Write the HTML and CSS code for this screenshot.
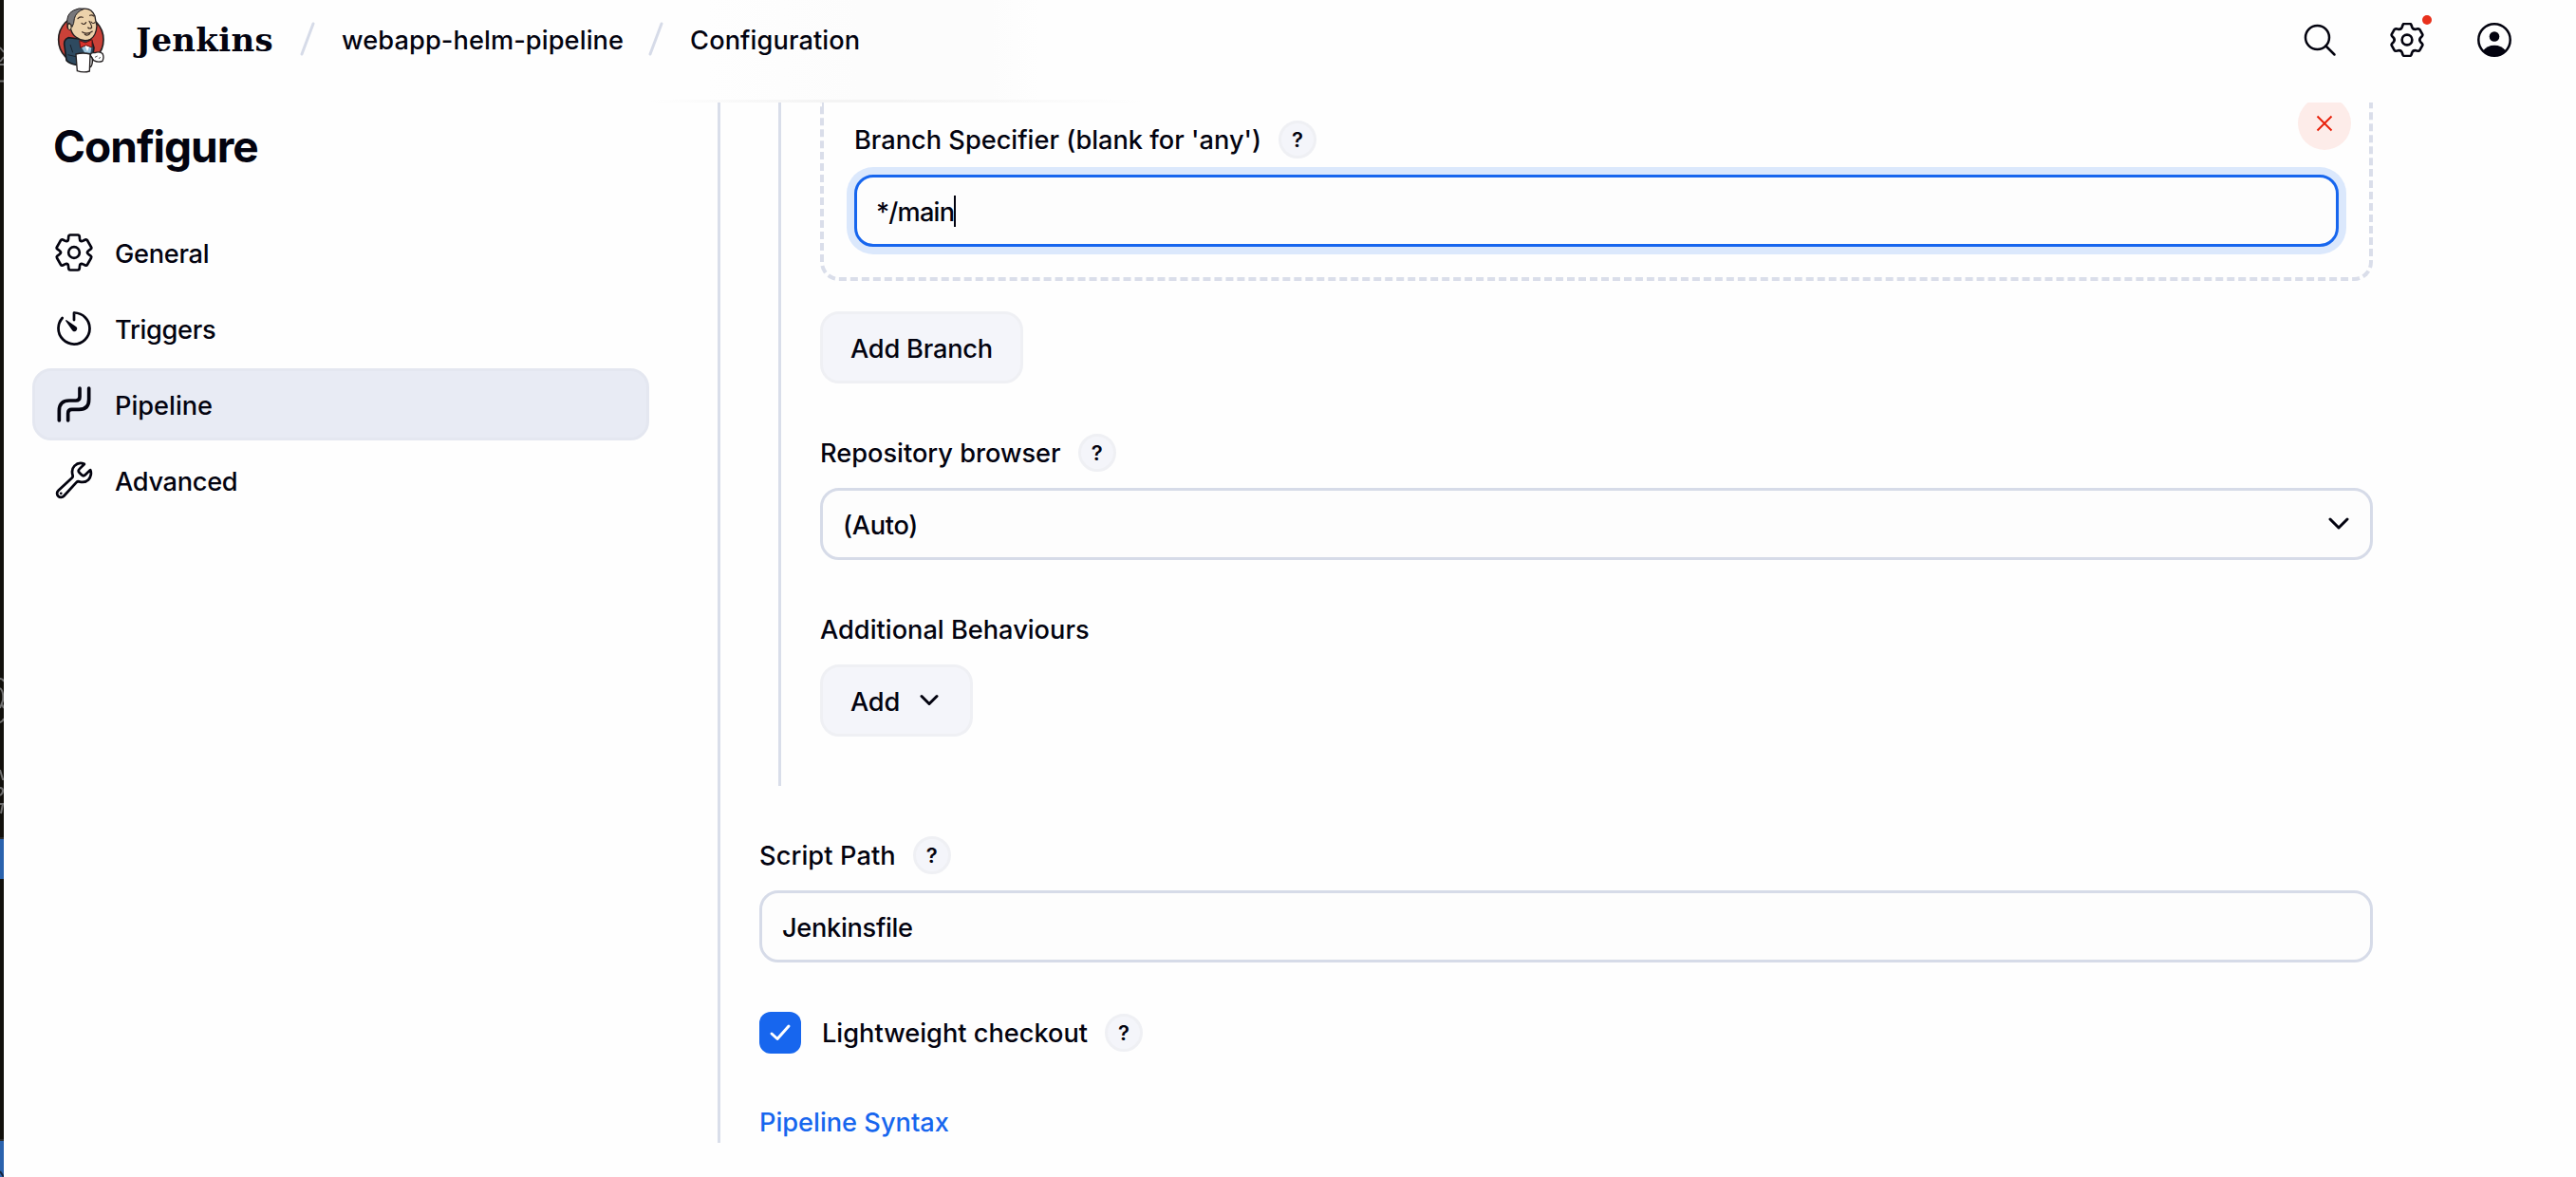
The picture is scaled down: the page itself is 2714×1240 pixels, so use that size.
FILE: index.html
```html
<!DOCTYPE html>
<html lang="en">
<head>
<meta charset="utf-8">
<title>webapp-helm-pipeline Config - Jenkins</title>
<link rel="stylesheet" href="styles.css">
</head>
<body>
<svg width="0" height="0" class="defs" aria-hidden="true">
  <defs>
    <path id="tooth" d="M-21 -36.4C-17 -38.7 -18 -42 -17.6 -46L-17.2 -51Q-16.5 -55.5 -12 -55.5H12Q16.5 -55.5 17.2 -51L17.6 -46C18 -42 17 -38.7 21 -36.4"/>
    <path id="lobe" d="M-20 -34.6C-15 -37.5 -16 -40 -14.5 -44L-13 -48Q-11.5 -51 -8 -51H8Q11.5 -51 13 -48L14.5 -44C16 -40 15 -37.5 20 -34.6"/>
  </defs>
</svg>
<div class="screen">
  <svg class="backdrop" width="4" height="1240" viewBox="0 0 4 1240">
    <rect width="4" height="1240" fill="#12100c"/>
    <g stroke="#6f6f6f" stroke-width="2" fill="none">
      <path d="M0 50L4 55M0 65L4 60M0 68H4M0 85.500H4"/>
      <path d="M0 715Q3 715 4 718M0 725Q4 728 3 738L0 746M2 742L4 746M0 761Q3 760 4 757M0 811L3 821H4M0 830Q3 830 3 833T0 838M0 847H4M3 847L1 857"/>
    </g>
    <rect y="882" width="4" height="2" fill="#2b2b2b"/>
    <rect y="884" width="4" height="42" fill="#2a62ad"/>
    <rect y="1200" width="4" height="2" fill="#2b2b2b"/>
    <rect y="1202" width="4" height="38" fill="#2a62ad"/>
    <path d="M0 1234L4 1240" stroke="#14233b" stroke-width="2"/>
  </svg>
  <div class="app">
    <header class="header">
      <svg class="logo" width="50" height="70" viewBox="180 20 150 210">
        <ellipse cx="256" cy="124" rx="71" ry="75" fill="#cb4138" stroke="#231f20" stroke-width="5"/>
        <path d="M216 118Q202 124 203 138L210 190Q222 202 242 204L290 196L297 150L290 128L250 122Z" fill="#2e4a60" stroke="#191b20" stroke-width="5"/>
        <path d="M222 140L230 165M214 172L240 178" stroke="#18222d" stroke-width="3" fill="none"/>
        <path d="M256 146L268 166H286L291 140Z" fill="#9cc4dc"/>
        <path d="M268 142L276 162L284 142Z" fill="#fff"/>
        <path d="M224 92Q212 92 213 80Q214 68 224 70Q228 38 256 28Q288 20 300 50Q302 66 306 80Q304 112 286 123Q264 134 240 116Q228 108 224 92Z" fill="#ecd2ab" stroke="#231f20" stroke-width="4"/>
        <path d="M213 76Q208 44 232 32Q250 22 266 27Q240 36 235 58Q234 74 228 84Q220 64 213 76Z" fill="#77777b" stroke="#231f20" stroke-width="3"/>
        <path d="M214 80Q216 70 224 76Q228 88 222 94Q214 94 214 80Z" fill="#ecd2ab" stroke="#231f20" stroke-width="3"/>
        <path d="M246 58Q252 50 262 54M284 48Q290 44 296 50M258 72Q266 80 272 70M288 68Q294 76 300 70M282 66Q290 80 290 86Q284 92 278 86M260 100Q276 110 292 98M268 108Q276 114 284 106" fill="none" stroke="#3a2a22" stroke-width="3.500" stroke-linecap="round"/>
        <path d="M251 127L270 134L291 124V149L272 142L254 150Z" fill="#d8322c" stroke="#5b1512" stroke-width="3"/>
        <path d="M286 174Q286 164 300 166Q312 160 324 168Q330 180 324 192Q310 198 296 190Z" fill="#fff" stroke="#231f20" stroke-width="4"/>
        <path d="M300 180L308 176M312 184L318 180" stroke="#555" stroke-width="3"/>
        <path d="M282 178Q294 176 292 196Q290 212 282 212" fill="#ddd" stroke="#231f20" stroke-width="4"/>
        <path d="M240 170Q262 164 285 170L283 224Q264 230 244 223Z" fill="#fff" stroke="#231f20" stroke-width="4"/>
      </svg>
      <span class="brand">Jenkins</span>
      <svg class="slash" width="16" height="36" viewBox="0 0 16 36"><path d="M2 34L14 2"/></svg>
      <span class="crumb">webapp-helm-pipeline</span>
      <svg class="slash" width="16" height="36" viewBox="0 0 16 36"><path d="M2 34L14 2"/></svg>
      <span class="crumb">Configuration</span>
      <div class="actions">
        <svg class="icon" width="36" height="36" viewBox="0 0 36 36"><circle cx="15.500" cy="15.500" r="12.500"/><path d="M24.500 24.500L33.500 33.500"/></svg>
        <span class="manage">
          <svg class="icon" width="36" height="36" viewBox="-54 -54 108 108">
            <g class="gear"><use href="#lobe"/><use href="#lobe" transform="rotate(60)"/><use href="#lobe" transform="rotate(120)"/><use href="#lobe" transform="rotate(180)"/><use href="#lobe" transform="rotate(240)"/><use href="#lobe" transform="rotate(300)"/><circle r="16"/></g>
          </svg>
          <span class="dot"></span>
        </span>
        <svg class="icon" width="36" height="36" viewBox="0 0 36 36"><circle cx="18" cy="18" r="16.700"/><circle class="solid" cx="18" cy="14.500" r="5.300"/><path class="solid" d="M6 29.500C9 25.500 13 23.700 18 23.700S27 25.500 30 29.500C27 33 22.500 34.800 18 34.800S9 33 6 29.500Z"/></svg>
      </div>
    </header>
    <div class="main">
      <aside class="sidebar">
        <h1>Configure</h1>
        <nav>
          <a class="item">
            <svg class="icon" width="44" height="44" viewBox="-66 -66 132 132">
              <g class="gear"><use href="#tooth"/><use href="#tooth" transform="rotate(60)"/><use href="#tooth" transform="rotate(120)"/><use href="#tooth" transform="rotate(180)"/><use href="#tooth" transform="rotate(240)"/><use href="#tooth" transform="rotate(300)"/><circle r="17.500"/></g>
            </svg><span class="text">General</span></a>
          <a class="item">
            <svg class="icon ion" width="44" height="44" viewBox="0 0 512 512"><path d="M112.910 128A191.850 191.850 0 0064 254c-1.180 106.350 85.650 193.800 192 194 106.200.2 192-85.830 192-192 0-104.540-83.550-189.610-187.500-192a4.360 4.360 0 00-4.500 4.370V152"/><path class="solid" d="M233.380 278.630l-79-113a8.130 8.130 0 0111.320-11.320l113 79a32.500 32.500 0 01-37.250 53.260 33.210 33.210 0 01-8.070-7.940z"/></svg><span class="text">Triggers</span></a>
          <a class="item active">
            <svg class="icon pipe" width="44" height="44" viewBox="0 0 132 132"><path d="M19 117V86Q19 54 51 54H72Q84 54 84 42V15"/><path d="M47 117V94Q47 82 59 82H82Q113 82 113 50V15"/></svg><span class="text">Pipeline</span></a>
          <a class="item">
            <svg class="icon ion" width="44" height="44" viewBox="0 0 512 512"><path d="M393.870 190a32.100 32.100 0 01-45.250 0l-26.570-26.570a32.090 32.090 0 010-45.260L382.190 58a1 1 0 00-.3-1.640c-38.820-16.640-89.150-8.160-121.110 23.570-30.580 30.350-32.320 76-21.120 115.840a31.930 31.930 0 01-9.060 32.080L64 380a48.170 48.170 0 1068 68l153.860-167a31.930 31.930 0 0131.600-9.130c39.540 10.590 84.540 8.600 114.720-21.190 32.490-32 39.500-88.560 23.750-120.930a1 1 0 00-1.600-.26z"/><circle class="solid" cx="96" cy="416" r="16"/></svg><span class="text">Advanced</span></a>
        </nav>
      </aside>
      <main class="content">
        <section class="scm">
          <div class="branch">
            <div class="label"><span class="name">Branch Specifier (blank for 'any')</span><span class="help">?</span></div>
            <div class="field focused"><span class="text">*/main</span><i class="caret"></i></div>
            <span class="remove"><svg width="18" height="18" viewBox="0 0 18 18"><path d="M1.500 1.500L16.500 16.500M16.500 1.500L1.500 16.500"/></svg></span>
          </div>
          <button class="button"><span class="text">Add Branch</span></button>
          <div class="label"><span class="name">Repository browser</span><span class="help">?</span></div>
          <div class="field select"><span class="text">(Auto)</span><svg class="chevron" width="22" height="14" viewBox="0 0 22 14"><path d="M2 2L11 11L20 2"/></svg></div>
          <div class="label"><span class="name">Additional Behaviours</span></div>
          <button class="button"><span class="text">Add</span><svg class="chevron small" width="20" height="14" viewBox="0 0 20 14"><path d="M2 2.500L10 10.500L18 2.500"/></svg></button>
        </section>
        <div class="label"><span class="name path">Script Path</span><span class="help">?</span></div>
        <div class="field"><span class="text">Jenkinsfile</span></div>
        <div class="check-row">
          <span class="checkbox"><svg width="24" height="20" viewBox="0 0 24 20"><path d="M3 11L9 16.500L21 3"/></svg></span>
          <span class="name">Lightweight checkout</span><span class="help">?</span>
        </div>
        <a class="link">Pipeline Syntax</a>
      </main>
    </div>
  </div>
</div>
</body>
</html>
```
FILE: styles.css
```css
* {
  box-sizing: border-box;
}

body {
  margin: 0;
  background: #fefefe;
  color: #03030f;
  font-family: Inter, "Noto Sans", sans-serif;
  font-size: 27.2px;
  font-weight: 450;
  line-height: 40px;
}

.defs {
  display: block;
  position: absolute;
}

.screen {
  display: flex;
  width: 2714px;
  height: 1240px;
  overflow: hidden;
}

.backdrop {
  flex: none;
  display: block;
}

.app {
  flex: 1;
  display: flex;
  flex-direction: column;
}

.header {
  display: flex;
  align-items: flex-start;
  height: 108px;
  padding-left: 56px;
  background:
    linear-gradient(90deg, transparent 680px, #f4f4f4 860px, #f4f4f4 940px, transparent 1200px) 0 105px / 100% 3px no-repeat,
    linear-gradient(90deg, transparent 740px, #fcfcfc 900px, #fcfcfc 1040px, transparent 1090px);
}

.header > span {
  margin-top: 23px;
  white-space: nowrap;
}

.logo {
  margin-top: 7px;
}

.header .brand {
  width: 148px;
  margin-top: 22px;
  margin-left: 33px;
  font-family: "DejaVu Serif", Georgia, serif;
  font-size: 34px;
  font-weight: 700;
  letter-spacing: 0.3px;
}

.slash {
  margin-top: 23px;
  margin-left: 25px;
  fill: none;
  stroke: #d6dbe8;
  stroke-width: 3;
  stroke-linecap: round;
}

.crumb {
  margin-left: 28px;
  font-weight: 500;
  letter-spacing: 0.1px;
}

.crumb + .slash {
  margin-left: 26px;
}

.icon {
  display: block;
  flex: none;
  fill: none;
  stroke: #03030f;
  stroke-width: 2.5;
  stroke-linecap: round;
  stroke-linejoin: round;
}

.icon .gear {
  stroke-width: 8;
}

.ion {
  stroke-width: 32;
}

.pipe {
  stroke-width: 11;
}

.icon .solid {
  fill: #03030f;
  stroke: none;
}

.actions {
  display: flex;
  gap: 56px;
  margin: 24px 68px 0 auto;
}

.manage {
  position: relative;
}

.dot {
  position: absolute;
  left: 34px;
  top: -8px;
  width: 10px;
  height: 10px;
  border-radius: 50%;
  background: #e8311c;
}

.main {
  flex: 1;
  display: flex;
  overflow: hidden;
}

.sidebar {
  width: 680px;
  padding-left: 30px;
}

h1 {
  margin: 18px 0 0 22px;
  font-size: 46px;
  font-weight: 700;
  line-height: 56px;
  letter-spacing: -1px;
}

nav {
  display: flex;
  flex-direction: column;
  gap: 4px;
  margin-top: 46px;
}

.item {
  display: flex;
  align-items: center;
  gap: 21px;
  height: 76px;
  padding-left: 22px;
  border-radius: 20px;
  letter-spacing: -0.3px;
}

.item.active {
  padding-left: 19px;
  border: 3px solid #e4e7f0;
  background: #e8ebf4;
  letter-spacing: 0;
}

.text {
  padding-top: 3px;
}

.content {
  width: 1744px;
  height: 1096px;
  margin-left: 72px;
  padding-left: 41px;
  border-left: 3px solid #d9deea;
}

.scm {
  height: 720px;
  margin-left: 20px;
  padding-left: 41px;
  border-left: 3px solid #d9deea;
}

.branch {
  position: relative;
  height: 188px;
  padding: 19px 32px 0;
  border: 4px dashed #dadeea;
  border-top: 0;
  border-radius: 0 0 20px 20px;
  margin-bottom: 32px;
}

.label {
  display: flex;
  align-items: center;
  height: 40px;
  margin: 53px 0 17px;
  font-weight: 500;
}

.branch .label {
  margin-top: 0;
}

.name {
  padding-top: 1px;
}

.name.path {
  letter-spacing: 0.1px;
}

.help {
  display: flex;
  align-items: center;
  justify-content: center;
  width: 40px;
  height: 40px;
  margin-left: 18px;
  border: 3px solid #eff0f4;
  border-radius: 50%;
  background: #f4f5fa;
  font-size: 22px;
  font-weight: 600;
}

.field {
  display: flex;
  align-items: center;
  height: 76px;
  padding: 0 21px;
  border: 3px solid #d6dbe8;
  border-radius: 20px;
  background: #fdfdfd;
  letter-spacing: -0.3px;
}

.focused {
  padding-left: 20px;
  border-color: #1766ee;
  box-shadow: 0 0 0 8px #dbe8fc;
  letter-spacing: -0.8px;
}

.caret {
  width: 2px;
  height: 33px;
  background: #03030f;
}

.remove {
  position: absolute;
  top: -6px;
  right: 19px;
  display: flex;
  align-items: center;
  justify-content: center;
  width: 56px;
  height: 56px;
  border-radius: 50%;
  background: #fdece9;
}

.remove svg {
  fill: none;
  stroke: #e8220c;
  stroke-width: 2;
}

.chevron {
  fill: none;
  stroke: #03030f;
  stroke-width: 3;
  stroke-linecap: round;
  stroke-linejoin: round;
}

.select {
  justify-content: space-between;
}

.select .chevron {
  margin-right: 1px;
}

.button {
  display: flex;
  align-items: center;
  height: 76px;
  padding: 0 29px;
  border: 3px solid #eff0f4;
  border-radius: 20px;
  background: #f4f5fa;
  color: inherit;
  font: inherit;
  font-weight: 500;
  letter-spacing: -0.2px;
}

.button .small {
  margin-left: 21px;
  margin-right: 4px;
}

.check-row {
  display: flex;
  align-items: center;
  height: 44px;
  margin: 52px 0 53px;
  font-weight: 500;
}

.checkbox {
  display: flex;
  align-items: center;
  justify-content: center;
  width: 44px;
  height: 44px;
  margin-right: 22px;
  border-radius: 12px;
  background: #1766ee;
}

.checkbox svg {
  fill: none;
  stroke: #fff;
  stroke-width: 3;
  stroke-linecap: round;
  stroke-linejoin: round;
}

.link {
  display: block;
  color: #1766ee;
  font-weight: 500;
}
```
